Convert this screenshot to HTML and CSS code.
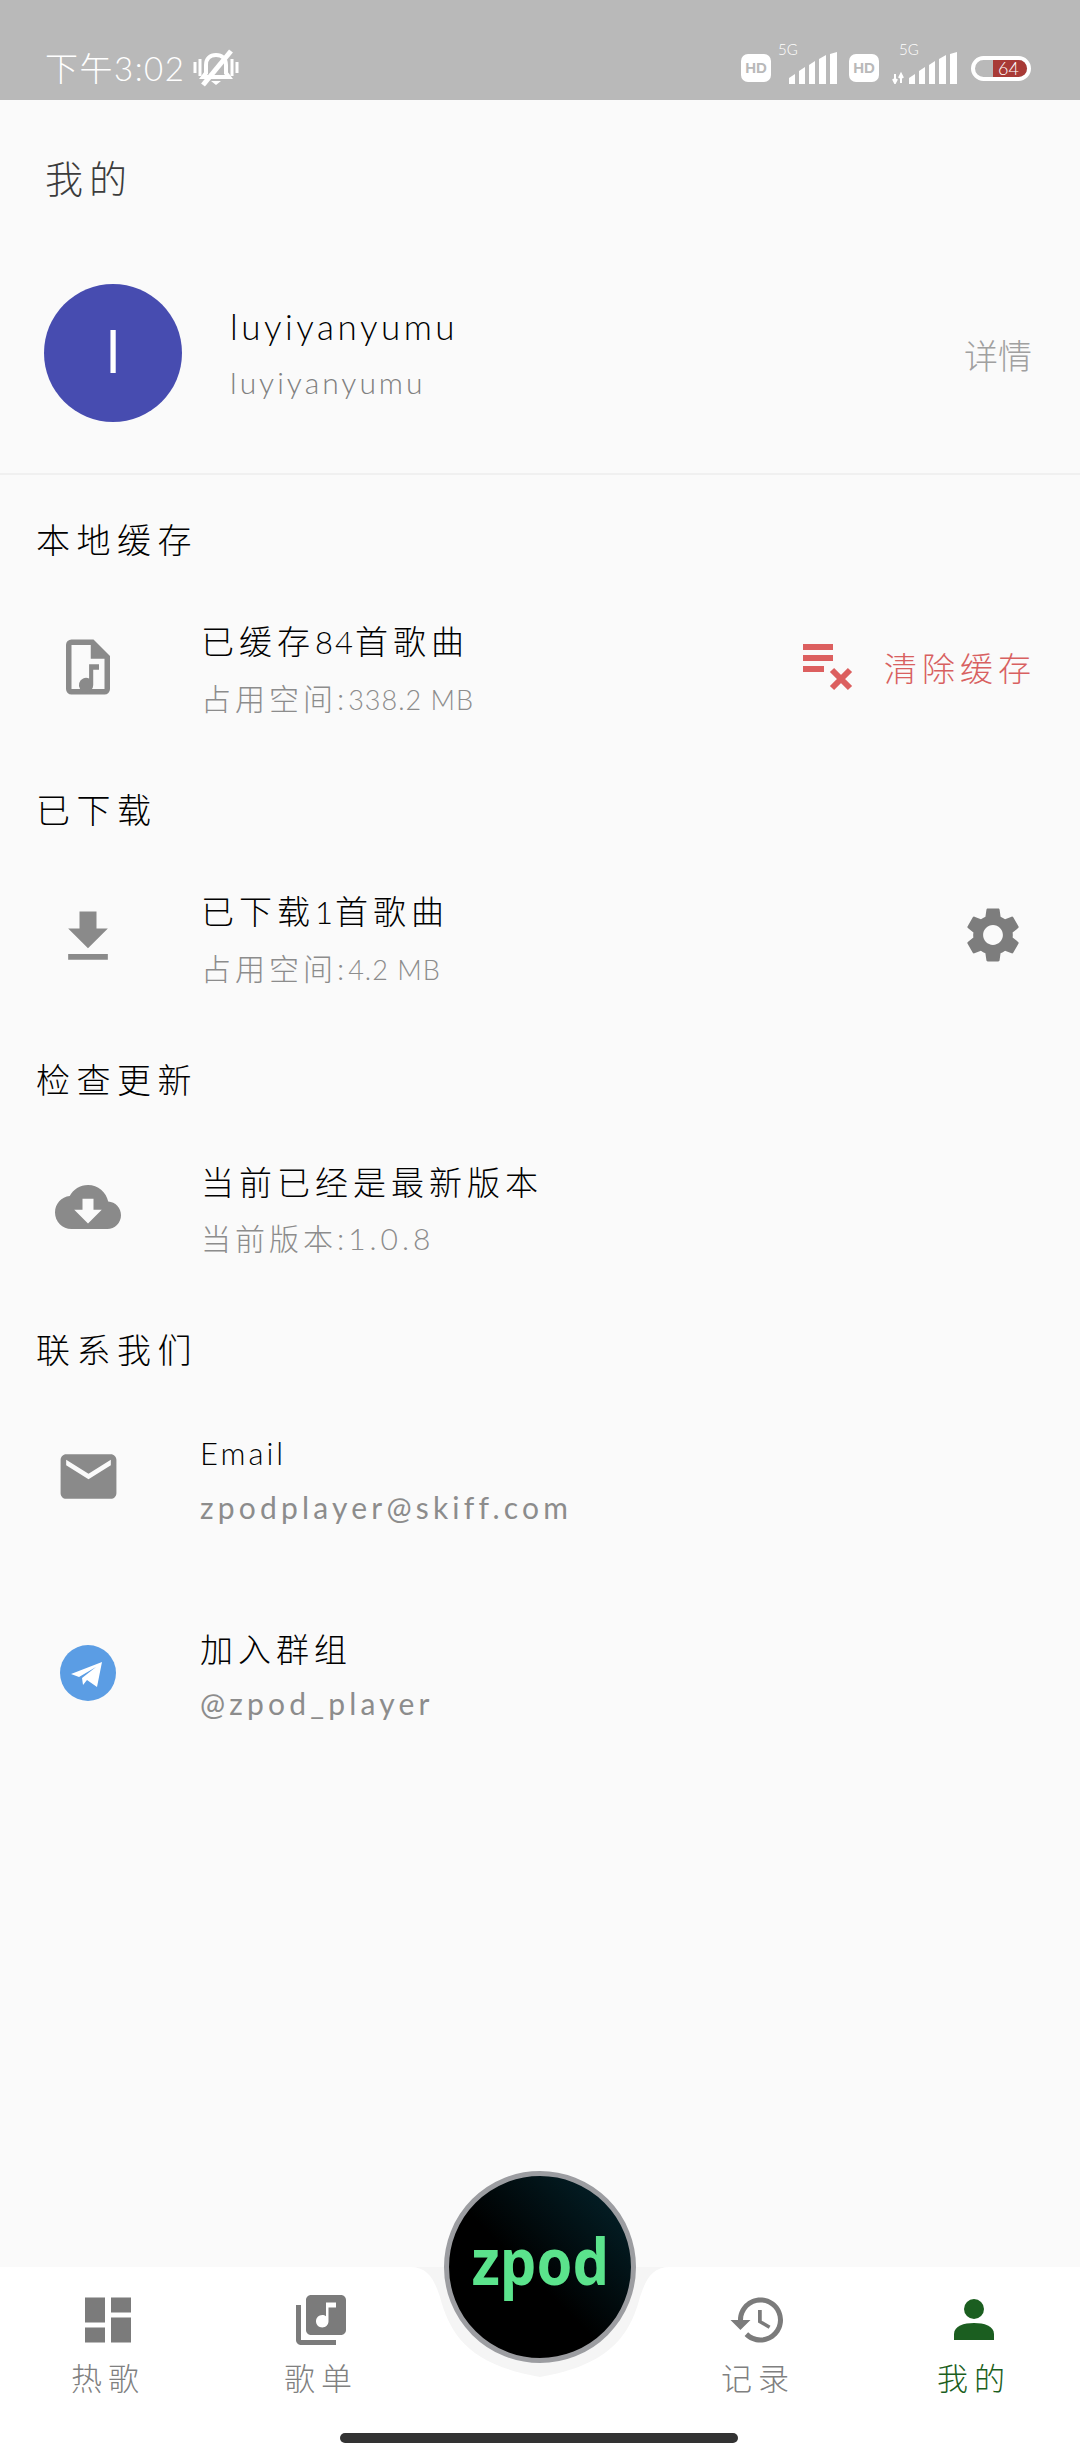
FILE: index.html
```html
<!DOCTYPE html>
<html lang="zh-CN">
<head>
    <meta charset="UTF-8">
    <meta name="viewport" content="width=device-width, initial-scale=1.0">
    <title>我的</title>
    <link rel="stylesheet" href="styles.css">
</head>
<body>
    <div class="app">
        <div class="status">
            <div class="status-left">
                <span class="clock">下午3:02</span>
                <svg class="bell" viewBox="0 0 46 38" width="46" height="38">
                    <path d="M23 6c-6 0-10 4-10 10v8l-3 4h26l-3-4v-8c0-6-4-10-10-10z" fill="none" stroke="#fff" stroke-width="4"/>
                    <path d="M18 32h10l-5 4z" fill="#fff"/>
                    <path d="M10 36L38 2" stroke="#fff" stroke-width="5"/>
                    <path d="M2 13v11M7 10v17M39 10v17M44 13v11" stroke="#fff" stroke-width="3"/>
                </svg>
            </div>
            <div class="status-right">
                <span class="hd">HD</span>
                <div class="signal">
                    <span class="net">5G</span>
                    <svg viewBox="0 0 48 32" width="48" height="32">
                        <path d="M0 32v-6l6-4v10zM10 32V19l6-4v17zM20 32V13l6-4v23zM30 32V7l7-4v29zM41 32V2l7-2v32z" fill="#fff"/>
                    </svg>
                </div>
                <span class="hd">HD</span>
                <div class="signal signal-wide">
                    <span class="net">5G</span>
                    <svg viewBox="0 0 66 32" width="66" height="32">
                        <path d="M4 22v8M2 27l2 4 2-4M10 31v-8M8 26l2-4 2 4" fill="none" stroke="#fff" stroke-width="2"/>
                        <path d="M18 32v-6l6-4v10zM28 32V19l6-4v17zM38 32V13l6-4v23zM48 32V7l7-4v29zM59 32V2l7-2v32z" fill="#fff"/>
                    </svg>
                </div>
                <div class="battery"><i></i><span>64</span></div>
            </div>
        </div>

        <h1 class="title">我的</h1>

        <div class="profile">
            <div class="avatar">l</div>
            <div class="texts">
                <div class="name">luyiyanyumu</div>
                <div class="nick">luyiyanyumu</div>
            </div>
            <div class="detail">详情</div>
        </div>

        <h2 class="heading">本地缓存</h2>
        <div class="row">
            <div class="row-icon">
                <svg viewBox="0 0 24 24" width="66" height="66" fill="#8a8a8a">
                    <path fill-rule="evenodd" d="M14 2H6a2 2 0 0 0-2 2v16a2 2 0 0 0 2 2h12a2 2 0 0 0 2-2V8l-6-6zM6 4h7v5h5v11H6V4z"/>
                    <path d="M16 11h-3.6v5.2a2.6 2.6 0 1 0 1.5 2.3V13H16z"/>
                </svg>
            </div>
            <div class="texts">
                <div class="main">已缓存<span class="num">84</span>首歌曲</div>
                <div class="sub">占用空间:<span class="num">338.2 MB</span></div>
            </div>
            <div class="clear">
                <svg viewBox="0 0 56 50" width="56" height="50">
                    <path d="M2 5h30M2 16h30M2 27h21" stroke="#dc5f5f" stroke-width="6"/>
                    <path d="M31 28l18 18M49 28L31 46" stroke="#dc5f5f" stroke-width="6"/>
                </svg>
                <span>清除缓存</span>
            </div>
        </div>

        <h2 class="heading">已下载</h2>
        <div class="row">
            <div class="row-icon">
                <svg viewBox="0 0 24 24" width="68" height="68" fill="#8a8a8a">
                    <path d="M19 9h-4V3H9v6H5l7 7 7-7zM5 18v2h14v-2H5z"/>
                </svg>
            </div>
            <div class="texts">
                <div class="main">已下载<span class="num">1</span>首歌曲</div>
                <div class="sub">占用空间:<span class="num">4.2 MB</span></div>
            </div>
            <div class="gear">
                <svg viewBox="0 0 24 24" width="66" height="66" fill="#7d7d7d">
                    <path d="M19.14 12.94c.04-.3.06-.61.06-.94 0-.32-.02-.64-.07-.94l2.03-1.58c.18-.14.23-.41.12-.61l-1.92-3.32c-.12-.22-.37-.29-.59-.22l-2.39.96c-.5-.38-1.03-.7-1.62-.94l-.36-2.54c-.04-.24-.24-.41-.48-.41h-3.84c-.24 0-.43.17-.47.41l-.36 2.54c-.59.24-1.13.57-1.62.94l-2.39-.96c-.22-.08-.47 0-.59.22L2.74 8.87c-.12.21-.08.47.12.61l2.03 1.58c-.05.3-.09.63-.09.94s.02.64.07.94l-2.03 1.58c-.18.14-.23.41-.12.61l1.92 3.32c.12.22.37.29.59.22l2.39-.96c.5.38 1.03.7 1.62.94l.36 2.54c.05.24.24.41.48.41h3.84c.24 0 .44-.17.47-.41l.36-2.54c.59-.24 1.13-.56 1.62-.94l2.39.96c.22.08.47 0 .59-.22l1.92-3.32c.12-.22.07-.47-.12-.61l-2.01-1.58zM12 15.6c-1.98 0-3.6-1.62-3.6-3.6s1.62-3.6 3.6-3.6 3.6 1.62 3.6 3.6-1.62 3.6-3.6 3.6z"/>
                </svg>
            </div>
        </div>

        <h2 class="heading">检查更新</h2>
        <div class="row">
            <div class="row-icon">
                <svg viewBox="0 0 24 24" width="66" height="66" fill="#8a8a8a">
                    <path d="M19.35 10.04C18.67 6.59 15.64 4 12 4 9.11 4 6.6 5.64 5.35 8.04 2.34 8.36 0 10.91 0 14c0 3.31 2.69 6 6 6h13c2.76 0 5-2.24 5-5 0-2.64-2.05-4.78-4.65-4.96zM17 13l-5 5-5-5h3V9h4v4h3z"/>
                </svg>
            </div>
            <div class="texts">
                <div class="main">当前已经是最新版本</div>
                <div class="sub">当前版本:1.0.8</div>
            </div>
        </div>

        <h2 class="heading">联系我们</h2>
        <div class="row">
            <div class="row-icon">
                <svg viewBox="0 0 24 24" width="67" height="67" fill="#8a8a8a">
                    <path d="M20 4H4c-1.1 0-1.99.9-1.99 2L2 18c0 1.1.9 2 2 2h16c1.1 0 2-.9 2-2V6c0-1.1-.9-2-2-2zm0 4l-8 5-8-5V6l8 5 8-5v2z"/>
                </svg>
            </div>
            <div class="texts latin">
                <div class="main">Email</div>
                <div class="sub">zpodplayer@skiff.com</div>
            </div>
        </div>
        <div class="row">
            <div class="row-icon">
                <svg viewBox="0 0 56 56" width="56" height="56">
                    <circle cx="28" cy="28" r="28" fill="#5b9de4"/>
                    <path d="M11 29L42 17L37 42L27 35L23 40L22 33L36 22L19 32Z" fill="#fff"/>
                </svg>
            </div>
            <div class="texts latin">
                <div class="main cjk">加入群组</div>
                <div class="sub">@zpod_player</div>
            </div>
        </div>

        <div class="nav">
            <svg class="notch" viewBox="0 0 260 112" width="260" height="112">
                <path d="M0 0C18 0 24 12 30 30C40 68 60 98 130 110C200 98 220 68 230 30C236 12 242 0 260 0Z" fill="#f5f5f5"/>
            </svg>
            <div class="fab"><span>zpod</span></div>
            <div class="tabs">
                <div class="tab">
                    <svg viewBox="0 0 46 45" width="46" height="60" fill="#7b7b7b">
                        <path d="M0 0h20v25H0zM0 30h20v15H0zM26 0h20v15H26zM26 20h20v25H26z"/>
                    </svg>
                    <span>热歌</span>
                </div>
                <div class="tab tab-music">
                    <svg viewBox="0 0 24 24" width="60" height="60" fill="#7b7b7b">
                        <path d="M20 2H8c-1.1 0-2 .9-2 2v12c0 1.1.9 2 2 2h12c1.1 0 2-.9 2-2V4c0-1.1-.9-2-2-2zm-2 5h-3v5.5c0 1.38-1.12 2.5-2.5 2.5S10 13.88 10 12.5s1.12-2.5 2.5-2.5c.57 0 1.08.19 1.5.51V5h4v2zM4 6H2v14c0 1.1.9 2 2 2h14v-2H4V6z"/>
                    </svg>
                    <span>歌单</span>
                </div>
                <div class="tab-gap"></div>
                <div class="tab">
                    <svg viewBox="0 0 24 24" width="60" height="60" fill="#7b7b7b">
                        <path d="M13 3c-4.97 0-9 4.03-9 9H1l3.89 3.89.07.14L9 12H6c0-3.87 3.13-7 7-7s7 3.13 7 7-3.13 7-7 7c-1.93 0-3.68-.79-4.94-2.06l-1.42 1.42C8.27 19.99 10.51 21 13 21c4.97 0 9-4.03 9-9s-4.03-9-9-9zm-1 5v5l4.28 2.54.72-1.21-3.5-2.08V8H12z"/>
                    </svg>
                    <span>记录</span>
                </div>
                <div class="tab active">
                    <svg viewBox="0 0 42 42" width="42" height="60" fill="#1b5e20">
                        <circle cx="21" cy="10" r="10"/>
                        <path d="M1 41v-6c0-8 10-11 20-11s20 3 20 11v6z"/>
                    </svg>
                    <span>我的</span>
                </div>
            </div>
            <div class="home-bar"></div>
        </div>
    </div>
</body>
</html>
```

FILE: styles.css
```css
*{
    box-sizing: border-box;
}
body,h1,h2{
    margin: 0;
    padding: 0;
    font-weight: 300;
}
body{
    font-family: "Lato", "Noto Sans CJK SC", sans-serif;
    background: #fafafa;
}
.app{
    width: 1080px;
    height: 2460px;
    display: flex;
    flex-direction: column;
    overflow: hidden;
    background: #fafafa;
}

/* status bar */
.status{
    height: 100px;
    flex: none;
    background: #b9b9b9;
    display: flex;
    justify-content: space-between;
    align-items: center;
    padding: 36px 49px 0 45px;
    color: #fff;
}
.status-left,.status-right{
    display: flex;
    align-items: center;
}
.clock{
    font-size: 33px;
    letter-spacing: 1.5px;
    line-height: 40px;
}
.bell{
    margin-left: 8px;
}
.hd{
    width: 30px;
    height: 28px;
    border-radius: 7px;
    background: #fff;
    color: #b9b9b9;
    font: 700 15px/28px "Liberation Sans", sans-serif;
    text-align: center;
}
.signal{
    position: relative;
    width: 48px;
    height: 32px;
    margin: 0 12px 0 18px;
}
.signal-wide{
    width: 66px;
    margin: 0 14px 0 12px;
}
.signal svg{
    display: block;
}
.net{
    position: absolute;
    top: -12px;
    left: -11px;
    font-size: 15px;
    line-height: 18px;
    color: #fff;
}
.signal-wide .net{
    left: 8px;
}
.battery{
    position: relative;
    width: 60px;
    height: 25px;
    border: 4px solid #fff;
    border-radius: 13px;
    font-size: 18px;
    line-height: 17px;
    text-align: right;
    padding-right: 8px;
}
.battery i{
    position: absolute;
    top: 0;
    right: 0;
    bottom: 0;
    width: 34px;
    border-radius: 0 9px 9px 0;
    background: #a83a36;
}
.battery span{
    position: relative;
}

/* header */
.title{
    height: 170px;
    flex: none;
    padding-left: 45px;
    font-size: 38px;
    letter-spacing: 6px;
    line-height: 156px;
    color: #3c3c3c;
}
.profile{
    height: 205px;
    flex: none;
    display: flex;
    align-items: flex-start;
    padding: 14px 48px 0 44px;
    border-bottom: 2px solid #f0f0f0;
}
.avatar{
    width: 138px;
    height: 138px;
    border-radius: 50%;
    background: #474cb0;
    color: #fff;
    font-size: 58px;
    font-weight: 400;
    line-height: 134px;
    text-align: center;
}
.profile .texts{
    margin: 20px 0 0 48px;
}
.name{
    font-size: 35px;
    line-height: 44px;
    letter-spacing: 3.5px;
    color: #000;
}
.nick{
    margin-top: 14px;
    font-size: 30px;
    line-height: 40px;
    letter-spacing: 3px;
    color: #808080;
}
.detail{
    margin: 50px 0 0 auto;
    font-size: 34px;
    line-height: 44px;
    color: #a0a0a0;
}

/* sections */
.heading{
    height: 130px;
    flex: none;
    padding-left: 36px;
    font-size: 34px;
    letter-spacing: 6.5px;
    line-height: 130px;
    color: #000;
}
.row{
    height: 130px;
    flex: none;
    margin-bottom: 10px;
    display: flex;
    align-items: center;
}
.row + .row{
    margin-top: 56px;
}
.row-icon{
    width: 120px;
    margin: 0 53px 7px 28px;
    display: flex;
    justify-content: center;
}
.row-icon svg{
    display: block;
}
.main{
    font-size: 33px;
    line-height: 40px;
    letter-spacing: 5px;
    color: #000;
}
.main .num{
    font-size: 31px;
    letter-spacing: 2px;
}
.sub{
    margin-top: 16px;
    font-size: 30px;
    line-height: 40px;
    letter-spacing: 4px;
    color: #8c8c8c;
}
.sub .num{
    font-size: 27px;
    letter-spacing: 1px;
}
.latin{
    margin-left: -1px;
}
.latin .main{
    font-size: 31px;
    letter-spacing: 3px;
}
.latin .cjk{
    font-size: 33px;
    letter-spacing: 5px;
}
.latin .sub{
    margin-top: 14px;
    font-weight: 400;
    letter-spacing: 4.2px;
    color: #8c8c8c;
}
.clear{
    margin: 0 0 6px auto;
    padding-right: 44px;
    display: flex;
    align-items: center;
    font-size: 33px;
    letter-spacing: 5px;
    color: #d86060;
}
.clear span{
    margin-left: 27px;
}
.gear{
    margin-left: auto;
    padding-right: 54px;
    margin-bottom: 7px;
}

/* bottom nav */
.nav{
    position: relative;
    margin-top: auto;
    height: 193px;
    flex: none;
    background: #fff;
}
.notch{
    position: absolute;
    left: 410px;
    top: 0;
}
.fab{
    position: absolute;
    left: 444px;
    top: -96px;
    width: 192px;
    height: 192px;
    border-radius: 50%;
    border: 5px solid #9c9da1;
    background: linear-gradient(45deg, #000 45%, #04262f);
    color: #5be38c;
    font: 700 64px/170px "Noto Sans", sans-serif;
    text-align: center;
}
.fab span{
    display: inline-block;
    transform: scaleX(.9);
}
.tabs{
    display: grid;
    grid-template-columns: 216px 216px 216px 220px 212px;
    padding-top: 23px;
}
.tab{
    display: flex;
    flex-direction: column;
    align-items: center;
    font-size: 31px;
    line-height: 40px;
    letter-spacing: 6px;
    color: #808080;
}
.tab svg{
    display: block;
}
.tab span{
    margin-top: 8px;
}
.tab-music{
    margin-left: -6px;
}
.active{
    color: #1b5e20;
}
.home-bar{
    position: absolute;
    left: 340px;
    bottom: 17px;
    width: 398px;
    height: 10px;
    border-radius: 5px;
    background: #333;
}
```
